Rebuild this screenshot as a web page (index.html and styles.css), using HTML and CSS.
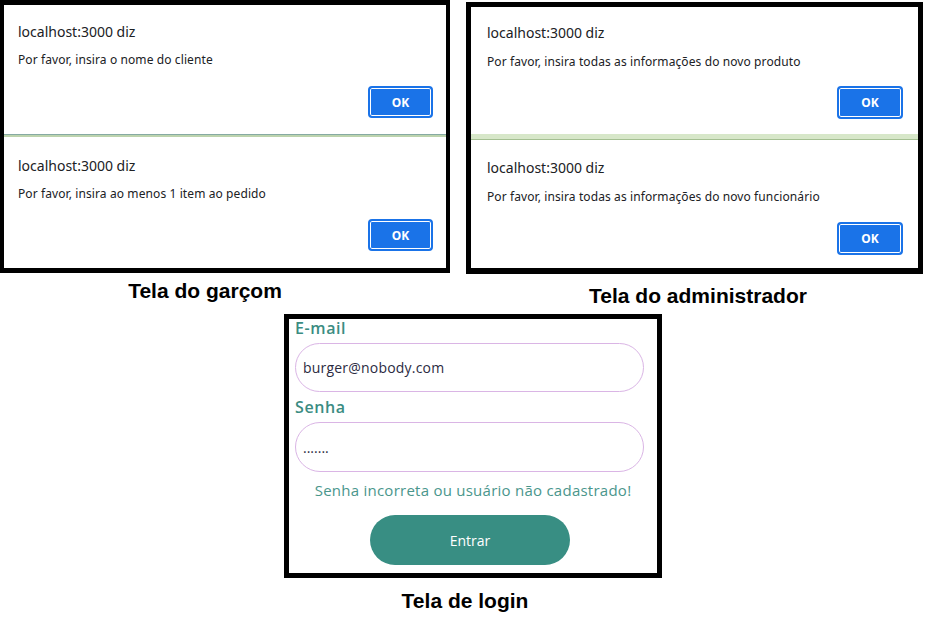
FILE: index.html
```html
<!DOCTYPE html>
<html lang="pt-BR">
<head>
<meta charset="utf-8">
<title>Telas</title>
<link rel="stylesheet" href="styles.css">
</head>
<body>
<main class="sheet">
  <div class="top-row">
    <figure class="shot shot-waiter">
      <div class="frame frame-waiter">
        <section class="dialog dialog-w1">
          <p class="dialog-title">localhost:3000 diz</p>
          <p class="dialog-msg">Por favor, insira o nome do cliente</p>
          <div class="dialog-actions"><button class="ok-btn">OK</button></div>
        </section>
        <div class="sep sep-waiter"></div>
        <section class="dialog dialog-w2">
          <p class="dialog-title">localhost:3000 diz</p>
          <p class="dialog-msg">Por favor, insira ao menos 1 item ao pedido</p>
          <div class="dialog-actions"><button class="ok-btn">OK</button></div>
        </section>
      </div>
      <figcaption class="caption caption-waiter">Tela do garçom</figcaption>
    </figure>
    <figure class="shot shot-admin">
      <div class="frame frame-admin">
        <section class="dialog dialog-a1">
          <p class="dialog-title">localhost:3000 diz</p>
          <p class="dialog-msg">Por favor, insira todas as informações do novo produto</p>
          <div class="dialog-actions"><button class="ok-btn ok-btn-lg">OK</button></div>
        </section>
        <div class="sep sep-admin"></div>
        <section class="dialog dialog-a2">
          <p class="dialog-title">localhost:3000 diz</p>
          <p class="dialog-msg">Por favor, insira todas as informações do novo funcionário</p>
          <div class="dialog-actions"><button class="ok-btn ok-btn-lg">OK</button></div>
        </section>
      </div>
      <figcaption class="caption caption-admin">Tela do administrador</figcaption>
    </figure>
  </div>
  <figure class="shot shot-login">
    <div class="frame frame-login">
      <form class="login-form">
        <label class="field-label" for="email">E-mail</label>
        <input class="field-input" id="email" type="text" value="burger@nobody.com">
        <label class="field-label field-label-2" for="senha">Senha</label>
        <input class="field-input field-pass" id="senha" type="text" value=".......">
        <p class="login-error">Senha incorreta ou usuário não cadastrado!</p>
        <button class="login-btn" type="button">Entrar</button>
      </form>
    </div>
    <figcaption class="caption caption-login">Tela de login</figcaption>
  </figure>
</main>
</body>
</html>
```
FILE: styles.css
```css
* { box-sizing: border-box; }
html, body { margin: 0; padding: 0; background: #fff; }
body { width: 926px; height: 621px; overflow: hidden; font-family: "Liberation Sans", Arial, sans-serif; }
p { margin: 0; }
figure { margin: 0; }

.sheet { display: flex; flex-direction: column; }
.top-row { display: flex; align-items: flex-start; }

.shot { display: flex; flex-direction: column; }

.frame { border: 5px solid #000; background: #fff; display: flex; flex-direction: column; }

.frame-waiter { width: 450px; height: 273px; border-left-width: 4px; border-right-width: 4px; }
.shot-admin { margin-left: 16px; margin-top: 2px; }
.frame-admin { width: 457px; height: 272px; border-bottom-width: 6px; }

.caption { margin: 0; font-weight: 700; font-size: 21px; line-height: 23px; color: #000; text-align: center; }
.caption-waiter { margin-top: 6px; padding-right: 40px; }
.caption-admin { margin-top: 10px; padding-left: 7px; }

.dialog { display: flex; flex-direction: column; font-family: "Noto Sans", "Open Sans", sans-serif; color: #202124; }
.dialog-title { font-size: 14px; line-height: 20px; }
.dialog-msg { font-size: 12px; line-height: 16px; letter-spacing: 0.1px; }
.dialog-actions { display: flex; justify-content: flex-end; }

.dialog-w1, .dialog-w2 { padding-left: 14px; padding-right: 13px; }
.dialog-w1 { height: 129px; padding-top: 17px; }
.dialog-w1 .dialog-msg { margin-top: 10px; }
.dialog-w1 .dialog-actions { margin-top: 18px; }
.dialog-w2 { height: 131px; padding-top: 19px; }
.dialog-w2 .dialog-msg { margin-top: 10px; }
.dialog-w2 .dialog-actions { margin-top: 17px; }

.dialog-a1, .dialog-a2 { padding-left: 16px; padding-right: 15px; }
.dialog-a1 { height: 127px; padding-top: 16px; }
.dialog-a1 .dialog-msg { margin-top: 11px; }
.dialog-a1 .dialog-actions { margin-top: 16px; }
.dialog-a2 { flex: 1; padding-top: 18px; }
.dialog-a2 .dialog-msg { margin-top: 11px; }
.dialog-a2 .dialog-actions { margin-top: 17px; }

.sep-waiter { height: 3px; border-top: 1px solid #86aaa3; background: #bcd3ad; }
.sep-admin { height: 6px; background: #d7e7c9; border-bottom: 1px solid #a4bf92; }

.ok-btn {
  width: 65px; height: 32px; padding: 0;
  background: #1a73e8; color: #fff;
  border: 2px solid #1a73e8; border-radius: 4px;
  box-shadow: inset 0 0 0 1px #fff;
  font-family: "Noto Sans", "Open Sans", sans-serif; font-weight: 700; font-size: 12px;
}
.ok-btn-lg { width: 66px; height: 33px; }

.shot-login { margin-left: 284px; margin-top: 7px; width: 378px; }
.frame-login { width: 378px; height: 264px; }
.caption-login { margin-top: 11px; padding-right: 16px; }

.login-form { display: flex; flex-direction: column; align-items: flex-start; padding: 0 6px; font-family: "Open Sans", "Noto Sans", sans-serif; }
.field-label { font-size: 16px; line-height: 18px; font-weight: 600; color: #3b8c82; letter-spacing: 0.6px; }
.field-label-2 { margin-top: 6px; }
.field-input {
  margin-top: 6px; width: 349px; height: 49px;
  border: 1px solid #dab5e5; border-radius: 25px;
  padding: 0 0 0 7px; outline: none;
  font-family: "Open Sans", "Noto Sans", sans-serif; font-size: 14px; color: #2b2b3f; background: #fff;
  letter-spacing: 0.2px;
}
.field-pass { height: 50px; letter-spacing: 0; }
.login-error { align-self: stretch; text-align: center; margin-top: 8px; font-size: 15px; line-height: 20px; color: #4a968c; letter-spacing: 0.25px; }
.login-btn {
  margin-top: 15px; margin-left: 75px; width: 200px; height: 50px;
  border: none; border-radius: 25px; background: #388e83; color: #fff;
  font-family: "Open Sans", "Noto Sans", sans-serif; font-size: 14px;
}
```
